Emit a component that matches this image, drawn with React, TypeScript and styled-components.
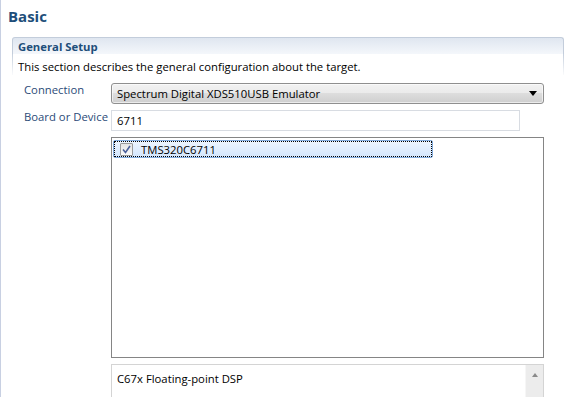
import { FC } from 'react';
import styled, { createGlobalStyle } from 'styled-components';

const GlobalStyle = createGlobalStyle`
  html, body {
    margin: 0;
    padding: 0;
    background: #ffffff;
  }
  body {
    font-family: 'Open Sans', 'Liberation Sans', sans-serif;
    font-size: 11.3px;
    color: #000;
  }
`;

const Page = styled.div`
  width: 577px;
  height: 397px;
  box-sizing: border-box;
  border-left: 1px solid #c8d0e2;
  padding: 6px 0 0 7px;
  overflow: hidden;
`;

const Title = styled.h1`
  margin: 0;
  font-size: 15px;
  font-weight: 700;
  color: #1e4e7a;
  line-height: 20px;
`;

const Section = styled.div`
  margin: 11px 0 0 4px;
  width: 552px;
`;

const SectionHeader = styled.div`
  height: 14px;
  padding: 2px 0 0 5px;
  border: 1px solid #c3cddb;
  border-bottom: none;
  border-radius: 3px 3px 0 0;
  background: linear-gradient(to bottom, #dfe6f0, #f4f7fb);
  font-weight: 700;
  color: #1e4e7a;
  line-height: 13px;
`;

const SectionBody = styled.div`
  border-style: solid;
  border-width: 0 1px 0 1px;
  border-image: linear-gradient(to bottom, #c3cddb, rgba(255, 255, 255, 0) 22px) 1;
  padding: 5px 0 0 5px;
`;

const Description = styled.div`
  line-height: 16px;
`;

const Form = styled.div`
  display: grid;
  grid-template-columns: 87px 1fr;
  row-gap: 6px;
  margin: 8px 0 0 12px;
`;

const Label = styled.div<{ $shift?: number }>`
  color: #2b4b78;
  line-height: 14px;
  margin-top: ${({ $shift }) => $shift ?? 0}px;
`;

const Combo = styled.div`
  width: 433px;
  height: 21px;
  box-sizing: border-box;
  display: flex;
  align-items: center;
  justify-content: space-between;
  padding: 0 6px 0 5px;
  border: 1px solid #8f8f8f;
  border-radius: 3px;
  background: linear-gradient(to bottom, #f2f2f2 0%, #ebebeb 45%, #dddddd 50%, #cfcfcf 100%);
  box-shadow: inset 0 0 0 1px rgba(255, 255, 255, 0.6);
`;

const Arrow = styled.span`
  width: 0;
  height: 0;
  border-left: 4px solid transparent;
  border-right: 4px solid transparent;
  border-top: 5px solid #000;
`;

const TextField = styled.div`
  width: 409px;
  height: 21px;
  box-sizing: border-box;
  border: 1px solid #d8dce2;
  padding: 0 5px;
  line-height: 19px;
`;

const ListBox = styled.div`
  grid-column: 2;
  width: 433px;
  height: 221px;
  box-sizing: border-box;
  border: 1px solid #858585;
  padding: 2px 1px;
`;

const ListItem = styled.div`
  width: 320px;
  height: 18px;
  box-sizing: border-box;
  display: flex;
  align-items: center;
  gap: 8px;
  padding-left: 6px;
  border: 1px solid #84acdd;
  border-radius: 2px;
  background: linear-gradient(to bottom, #eef5fe, #d3e6fd);
  outline: 1px dotted #000;
  outline-offset: -2px;
`;

const Check = styled.span`
  width: 13px;
  height: 13px;
  box-sizing: border-box;
  border: 1px solid #9c9c9c;
  border-radius: 1px;
  background: linear-gradient(to bottom, #e4e4e4, #fafafa);
  display: flex;
  align-items: center;
  justify-content: center;
`;

const InfoBox = styled.div`
  grid-column: 2;
  width: 433px;
  height: 40px;
  box-sizing: border-box;
  display: flex;
  justify-content: space-between;
  border: 1px solid #d4d4d4;
  border-bottom: none;
  padding-left: 5px;
`;

const InfoText = styled.div`
  line-height: 16px;
  padding-top: 6px;
`;

const ScrollBar = styled.div`
  width: 17px;
  background: #ececec;
  border-left: 1px solid #f6f6f6;
  display: flex;
  justify-content: center;
  padding-top: 8px;
`;

const UpArrow = styled.span`
  width: 0;
  height: 0;
  border-left: 3.5px solid transparent;
  border-right: 3.5px solid transparent;
  border-bottom: 4px solid #8a8a8a;
`;

const App: FC = () => {
  return (
    <>
      <GlobalStyle />
      <Page>
        <Title>Basic</Title>
        <Section>
          <SectionHeader>General Setup</SectionHeader>
          <SectionBody>
            <Description>This section describes the general configuration about the target.</Description>
          </SectionBody>
          <Form>
            <Label $shift={0}>Connection</Label>
            <Combo>
              <span>Spectrum Digital XDS510USB Emulator</span>
              <Arrow />
            </Combo>
            <Label $shift={0}>Board or Device</Label>
            <TextField>6711</TextField>
            <ListBox>
              <ListItem>
                <Check>
                  <svg width="9" height="9" viewBox="0 0 9 9">
                    <path d="M1 4.5 L3.5 7.5 L8 1" fill="none" stroke="#4a5f9a" strokeWidth="1.6" />
                  </svg>
                </Check>
                <span>TMS320C6711</span>
              </ListItem>
            </ListBox>
            <InfoBox>
              <InfoText>C67x Floating-point DSP</InfoText>
              <ScrollBar>
                <UpArrow />
              </ScrollBar>
            </InfoBox>
          </Form>
        </Section>
      </Page>
    </>
  );
};

export default App;
